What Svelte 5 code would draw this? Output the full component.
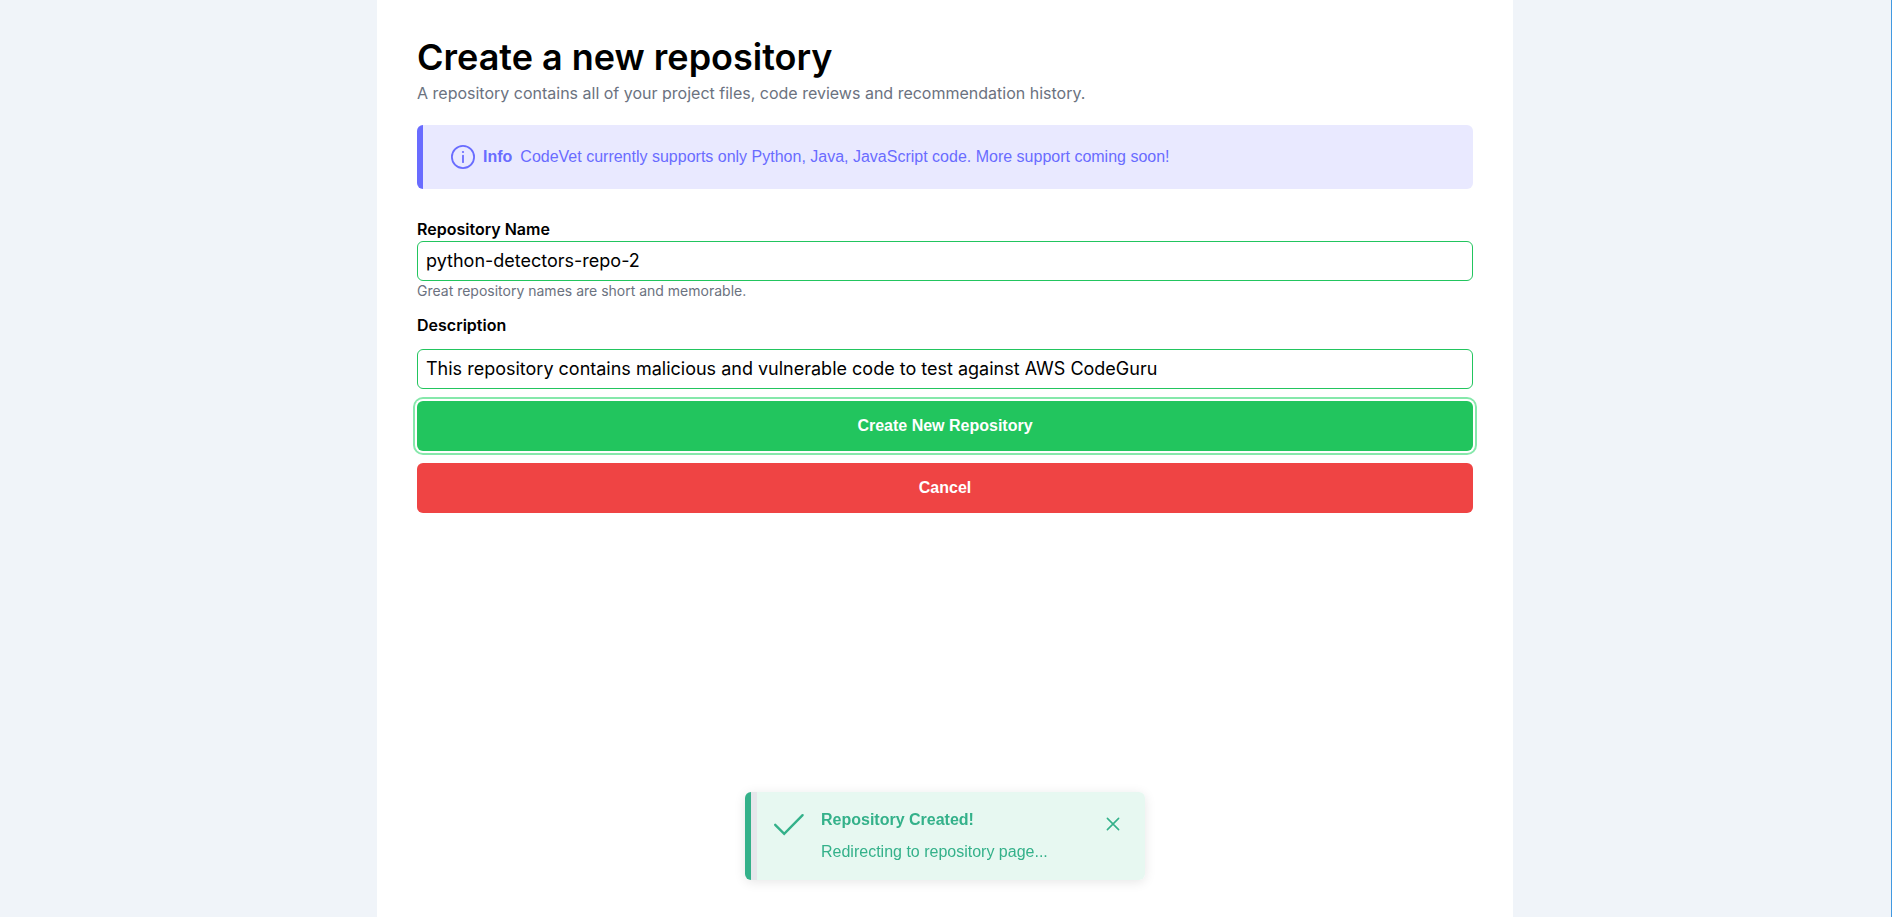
<script>
  let name = $state('python-detectors-repo-2');
  let description = $state(
    'This repository contains malicious and vulnerable code to test against AWS CodeGuru'
  );
  let toastOpen = $state(true);
</script>

<div class="page">
  <main class="panel">
    <header>
      <h1>Create a new repository</h1>
      <p>A repository contains all of your project files, code reviews and recommendation history.</p>
    </header>

    <div class="message" role="note">
      <svg width="24" height="24" viewBox="0 0 24 24" fill="none" aria-hidden="true">
        <circle cx="12" cy="12" r="11.1" stroke="currentColor" stroke-width="1.8" />
        <path d="M12 10.6v6.6" stroke="currentColor" stroke-width="1.8" stroke-linecap="round" />
        <circle cx="12" cy="7" r="1.1" fill="currentColor" />
      </svg>
      <strong>Info</strong>
      <span>CodeVet currently supports only Python, Java, JavaScript code. More support coming soon!</span>
    </div>

    <form onsubmit={(e) => e.preventDefault()}>
      <div class="field">
        <label for="repo-name">Repository Name</label>
        <input id="repo-name" type="text" bind:value={name} aria-describedby="repo-hint" />
        <small id="repo-hint">Great repository names are short and memorable.</small>
      </div>
      <label for="repo-description">Description</label>
      <input id="repo-description" type="text" bind:value={description} />
      <button class="submit" type="submit">Create New Repository</button>
      <button class="cancel" type="button">Cancel</button>
    </form>
  </main>

  {#if toastOpen}
    <div class="toast" role="status">
      <div class="toast-body">
        <svg class="check" width="32" height="32" viewBox="0 0 32 32" fill="none" aria-hidden="true">
          <path d="M2.2 16.8l9 9L29.6 7.2" stroke="currentColor" stroke-width="2.4" stroke-linecap="round" />
        </svg>
        <div class="toast-text">
          <strong>Repository Created!</strong>
          <span>Redirecting to repository page...</span>
        </div>
        <button class="close" type="button" aria-label="Close" onclick={() => (toastOpen = false)}>
          <svg width="16" height="16" viewBox="0 0 16 16" fill="none" aria-hidden="true">
            <path d="M2.4 2.4l11.2 11.2M13.6 2.4L2.4 13.6" stroke="currentColor" stroke-width="1.6" stroke-linecap="round" />
          </svg>
        </button>
      </div>
    </div>
  {/if}
</div>

<style>
  :global(body) {
    margin: 0;
    background: #f0f4f9;
  }
  .page,
  .page * {
    box-sizing: border-box;
  }
  .page {
    min-height: 100vh;
    display: flex;
    justify-content: center;
    padding-right: 1px;
    border-right: 1px solid #4299e1;
    background: #f0f4f9;
    font-family: Inter, sans-serif;
    font-size: 16px;
    line-height: 24px;
    color: #000;
  }
  .panel {
    width: 100%;
    max-width: 1136px;
    padding: 36px 40px;
    background: #fff;
  }
  h1 {
    margin: 0 0 3px;
    font-size: 36px;
    line-height: 42px;
    font-weight: 600;
  }
  p {
    margin: 0;
    color: #6b7280;
  }
  .message {
    display: flex;
    align-items: center;
    gap: 8px;
    margin: 20px 0 28px;
    padding: 20px 28px;
    min-height: 64px;
    border-left: 6px solid #696cff;
    border-radius: 6px;
    background: #e9e9ff;
    color: #696cff;
    font-family: 'Liberation Sans', Arial, sans-serif;
  }
  form {
    display: flex;
    flex-direction: column;
    gap: 12px;
  }
  .field {
    display: flex;
    flex-direction: column;
  }
  label {
    font-weight: 600;
  }
  input {
    width: 100%;
    height: 40px;
    padding: 6px 8px 8px;
    border: 1px solid #22c55e;
    border-radius: 6px;
    background: #fff;
    color: #000;
    font: 18px/24px Inter, sans-serif;
  }
  small {
    font-size: 14px;
    line-height: 20px;
    color: #6b7280;
  }
  button {
    border: 0;
    cursor: pointer;
  }
  .submit,
  .cancel {
    height: 50px;
    border-radius: 6px;
    color: #fff;
    font: 700 16px 'Liberation Sans', Arial, sans-serif;
  }
  .submit {
    background: #22c55e;
    box-shadow: 0 0 0 2px #fff, 0 0 0 4px #86e8ab;
  }
  .cancel {
    background: #ef4444;
  }
  .toast {
    position: fixed;
    bottom: 37px;
    left: 50%;
    width: 400px;
    margin-left: -201px;
    border-left: 6px solid #34b18a;
    border-radius: 6px;
    box-shadow: 0 2px 12px rgba(0, 0, 0, 0.1);
    overflow: hidden;
    color: #34b18a;
    font-family: 'Liberation Sans', Arial, sans-serif;
  }
  .toast-body {
    display: flex;
    align-items: flex-start;
    padding: 16px;
    border-left: 6px solid #e5e7eb;
    background: #e7f8f1;
  }
  .toast-text {
    flex: 1;
    display: flex;
    flex-direction: column;
    gap: 8px;
    margin-left: 16px;
  }
  .close {
    display: grid;
    place-items: center;
    width: 32px;
    height: 32px;
    padding: 0;
    background: transparent;
    color: inherit;
  }
</style>
